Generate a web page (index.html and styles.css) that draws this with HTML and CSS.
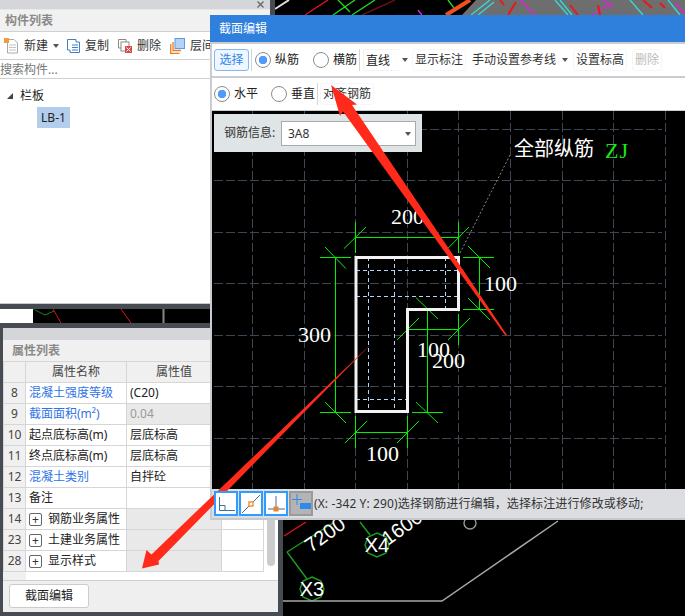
FILE: index.html
```html
<!DOCTYPE html>
<html lang="zh">
<head>
<meta charset="utf-8">
<title>截面编辑</title>
<link rel="stylesheet" href="styles.css">
</head>
<body>
<div class="page">
  <svg class="backdrop" width="685" height="616" viewBox="0 0 685 616">
    <polygon points="462,15 476,0 685,0 685,15" fill="#6e6e6e"/>
    <g fill="none" stroke-width="1.4">
      <path d="M275 9L289 0" stroke="#ddd" stroke-width="2"/>
      <path d="M305 15L328 0M284 536L306 522" stroke="#e0141e"/>
      <path d="M333 15L355 0M352 15L375 0M338 0L350 12M448 0L454 8" stroke="#22d622"/>
      <path d="M362 15L395 0" stroke="#6a0f0f"/>
      <path d="M418 10L422 15" stroke="#e020e0"/>
      <path d="M446 15L470 0" stroke="#f0501a" stroke-width="4"/>
      <path d="M471 15L490 0M478 15L494 2M555 0L568 15M560 0L572 15M630 0L643 15M668 0L680 15" stroke="#35d8d8"/>
      <path d="M520 0L535 15M604 0L612 8M592 15L612 3M684 13L675 3" stroke="#e020e0"/>
      <path d="M500 0L504 5M508 15L516 2M570 5L578 15M598 5L600 15M643 0L652 8M660 3L665 8" stroke="#e81818" stroke-width="2"/>
      <path d="M287 552L333 523M287 552L307 579M360 522L370 535" stroke="#1f9b1f"/>
      <polygon points="312,577 321,581 324,589 321,597 312,601 303,597 300,589 303,581" stroke="#1f9b1f"/>
      <polygon points="377,533 386,537 389,545 386,553 377,557 368,553 365,545 368,537" stroke="#1f9b1f"/>
      <circle cx="470" cy="523" r="6" stroke="#999"/>
      <path d="M283 601H442L558 521" stroke="#a8a8a8" stroke-width="1.5"/>
    </g>
    <text class="bgnum" x="312" y="596" text-anchor="middle">X3</text>
    <text class="bgnum" x="377" y="552" text-anchor="middle">X4</text>
    <text class="bgnum" transform="translate(311 553) rotate(-36)">7200</text>
    <text class="bgnum" transform="translate(388 546) rotate(-36)">1600</text>
  </svg>

  <section class="comp-window">
    <div class="strip"><svg class="close" width="7" height="7" viewBox="0 0 7 7"><path d="M.5.5L6.500 6.500M6.500.5L.5 6.500" stroke="#666" stroke-width="1.300"/></svg></div>
    <div class="pane-title">构件列表</div>
    <div class="comp-toolbar">
      <svg class="tool-icon" width="16" height="17" viewBox="0 0 16 17"><path d="M4.500 2.500H11L14.500 6V16H4.500Z" fill="#fff" stroke="#aaa"/><path d="M6 8H13M6 10.500H13M6 13H13" stroke="#c4c4c4"/><rect x="1" y="1" width="5" height="5" fill="#f39a3c"/></svg>
      <span class="tool-label">新建</span><i class="caret caret-tool"></i>
      <svg class="tool-icon icon-copy" width="13" height="14" viewBox="0 0 13 14"><path d="M.5.500H9V3H12.500V13.500H3V11H.5Z" fill="#fff" stroke="#3f7fd0"/><path d="M5 6H11M5 8.500H11M5 11H11" stroke="#3f7fd0"/></svg>
      <span class="tool-label">复制</span>
      <svg class="tool-icon icon-del" width="14" height="14" viewBox="0 0 14 14"><path d="M.5.500H8V3M.5.500V9H3" fill="none" stroke="#888"/><rect x="3" y="3" width="8" height="9" fill="#fff" stroke="#888"/><rect x="7" y="7" width="7" height="7" fill="#d94a4a"/><path d="M8.500 8.500L12.500 12.500M12.500 8.500L8.500 12.500" stroke="#fff"/></svg>
      <span class="tool-label">删除</span>
      <svg class="tool-icon icon-layer" width="15" height="16" viewBox="0 0 15 16"><path d="M.7 6V15.300H9.500M3 4V12.500H11" fill="none" stroke="#ec7a22" stroke-width="1.300"/><rect x="5" y=".5" width="9.500" height="10" fill="#b5d2f5" stroke="#5f9ae0"/></svg>
      <span class="tool-label">层间</span>
    </div>
    <div class="search">搜索构件...</div>
    <div class="tree">
      <div class="tree-root"><i class="tree-arrow"></i><span>栏板</span></div>
      <div class="tree-leaf">LB-1</div>
    </div>
    <div class="comp-foot">
      <div class="foot-white"></div>
      <svg class="foot-cad" width="237" height="14" viewBox="0 0 237 14"><g fill="none"><path d="M0 0L2 0M2 1L12 6L21 2" stroke="#14821e" stroke-width="1"/><path d="M20 0L28 14M88 0L98 14" stroke="#d8131e"/><path d="M130.500 0V14" stroke="#888" stroke-width="2"/></g></svg>
    </div>
  </section>

  <section class="prop-window">
    <div class="prop-inner">
      <div class="prop-cap"></div>
      <div class="pane-title prop-title">属性列表</div>
      <table class="prop-table">
        <colgroup><col class="c-no"><col class="c-name"><col class="c-val"><col class="c-ext"></colgroup>
        <tr class="head"><th></th><th>属性名称</th><th>属性值</th><th></th></tr>
        <tr><th>8</th><td class="link">混凝土强度等级</td><td>(C20)</td><td></td></tr>
        <tr><th>9</th><td class="link">截面面积(m²)</td><td class="muted">0.04</td><td class="muted"></td></tr>
        <tr><th>10</th><td>起点底标高(m)</td><td>层底标高</td><td></td></tr>
        <tr><th>11</th><td>终点底标高(m)</td><td>层底标高</td><td></td></tr>
        <tr><th>12</th><td class="link">混凝土类别</td><td>自拌砼</td><td></td></tr>
        <tr><th>13</th><td>备注</td><td></td><td></td></tr>
        <tr><th>14</th><td><span class="plus">+</span>钢筋业务属性</td><td class="muted"></td><td></td></tr>
        <tr><th>23</th><td><span class="plus">+</span>土建业务属性</td><td class="muted"></td><td></td></tr>
        <tr><th>28</th><td><span class="plus">+</span>显示样式</td><td class="muted"></td><td></td></tr>
      </table>
      <div class="prop-rest"><div class="rest-no"></div></div>
      <div class="prop-actions"><button class="edit-btn">截面编辑</button></div>
      <div class="scroll-thumb"></div>
    </div>
  </section>

  <section class="dialog">
    <div class="dlg-title">截面编辑</div>
    <div class="dlg-row">
      <button class="btn-select">选择</button>
      <i class="sep sep-a"></i>
      <label class="radio on r-long">纵筋</label>
      <label class="radio r-cross">横筋</label>
      <i class="sep sep-b"></i>
      <span class="combo">直线</span><i class="caret caret-combo"></i>
      <span class="act act-show">显示标注</span>
      <span class="act act-ref">手动设置参考线</span><i class="caret caret-ref"></i>
      <span class="act act-level">设置标高</span>
      <span class="act act-del">删除</span>
    </div>
    <div class="dlg-row row-two">
      <label class="radio on r-h">水平</label>
      <label class="radio r-v">垂直</label>
      <i class="sep sep-c"></i>
      <span class="act act-align">对齐钢筋</span>
    </div>
    <div class="cad">
      <svg class="cad-draw" width="473" height="378" viewBox="212 111 473 378">
        <g class="grid">
          <path d="M214 129.500H662M214 180.500H662M214 232.500H662M214 283.500H662M214 335.500H662M214 386.500H662M214 438.500H662"/>
          <path d="M252.500 111V489M304.500 111V489M355.500 111V489M407.500 111V489M458.500 111V489M510.500 111V489M562.500 111V489M613.500 111V489M665.500 111V489"/>
        </g>
        <path class="leader" d="M510 155L460 253"/>
        <g class="inner">
          <path d="M368.500 257V411M394.500 257V411M445.500 257V309M356 270.500H458M356 296.500H458M356 399.500H407"/>
        </g>
        <g class="dim">
          <path d="M356 237.500H458M355.500 222V253M458.500 222V253M344 248.600L366 227M447.700 248.600L469 227"/>
          <path d="M335.500 257V412M320 257.500H351M320 412.500H351M325 247L346 268.700M325 402L346 423"/>
          <path d="M479.500 257V309M463 257.500H494M463 309.500H494M468 246L490 268M468 298L490 320"/>
          <path d="M427.500 309V412M412 309.500H443M412 412.500H443M416 297.700L438 319M416 402L438 423"/>
          <path d="M407 329.500H458M407.500 314V345M458.500 314V345M397 340L419 318M448 340L470 318"/>
          <path d="M356 432.500H407M355.500 416V448M407.500 416V448M345 443L367 421M397 443L419 421"/>
        </g>
        <path class="outline" d="M356 257.500H458.500V309.500H407.500V411.500H356Z"/>
        <text class="num" x="391" y="224">200</text>
        <text class="num" x="484" y="291">100</text>
        <text class="num" x="298" y="342">300</text>
        <text class="num" x="417" y="357">100</text>
        <text class="num" x="432" y="368">200</text>
        <text class="num" x="366" y="461">100</text>
        <text class="note" x="514" y="156">全部纵筋</text>
        <text class="note-code" x="605" y="158">ZJ</text>
      </svg>
      <div class="rebar-info">
        <span class="info-label">钢筋信息:</span>
        <span class="info-select">3A8<i class="caret caret-select"></i></span>
      </div>
    </div>
    <div class="status">
      <span class="snap"><svg width="20" height="20" viewBox="0 0 20 20"><path d="M3.500 3V16.500H19M3.500 11.500H9V16.500" fill="none" stroke="#3e6f9e"/></svg></span>
      <span class="snap"><svg width="20" height="20" viewBox="0 0 20 20"><path d="M1 19L19 1" stroke="#3e6f9e"/><rect x="8" y="8" width="4" height="4" fill="#fff" stroke="#e8842c" stroke-width="1.300"/></svg></span>
      <span class="snap"><svg width="20" height="20" viewBox="0 0 20 20"><path d="M10 2V15M2 15H19" stroke="#3e6f9e"/><rect x="8" y="13" width="4" height="4" fill="#e8842c" stroke="#e8842c"/></svg></span>
      <span class="snap snap-on"><svg width="20" height="20" viewBox="0 0 20 20"><path d="M6 0V11M1 5.500H11" stroke="#2d8bee"/><rect x="9" y="9" width="11" height="6" fill="#2d8bee"/></svg></span>
      <span class="status-text">(X: -342 Y: 290)选择钢筋进行编辑，选择标注进行修改或移动;</span>
    </div>
  </section>

  <svg class="arrows" width="685" height="616" viewBox="0 0 685 616">
    <polygon points="331,85 357,104.500 352,105 507,335 505,335 343,111.500 340,116"/>
    <polygon points="142,568.500 146.500,550 151.500,554.500 372,343 158.500,561 159,564.500"/>
  </svg>
</div>
</body>
</html>
```
FILE: styles.css
```css
* { box-sizing: border-box; }
html, body { margin: 0; padding: 0; }
body {
  width: 685px;
  height: 616px;
  overflow: hidden;
  background: #000;
  font: 12px/18px "Noto Sans", "Noto Sans CJK SC", sans-serif;
  color: #222;
}
.page { position: relative; width: 685px; height: 616px; overflow: hidden; }
.backdrop { position: absolute; left: 0; top: 0; display: block; }
.bgnum { font: 20px "Liberation Sans", sans-serif; fill: #fff; }

/* component list window */
.comp-window {
  position: absolute; left: 0; top: 0; width: 275px; height: 323px;
  background: #fff; border-right: 5px solid #474c52;
  display: flex; flex-direction: column;
}
.strip { flex: none; height: 10px; background: #d5d6da; border-bottom: 1px solid #e8e8e8; position: relative; }
.close { position: absolute; left: 257px; top: 1px; display: block; }
.pane-title {
  flex: none; height: 22px; padding-left: 5px; line-height: 21px; background: #f1f1f1;
  border-bottom: 1px solid #cfd0d2; color: #8a8a8a; font-weight: 700;
}
.comp-toolbar {
  flex: none; height: 28px; display: flex; align-items: center; padding-left: 3px;
  border-bottom: 1px solid #cfd0d2; background: #fff; white-space: nowrap;
}
.tool-icon { flex: none; }
.tool-label { color: #333; margin-left: 5px; }
.icon-copy { margin-left: 8px; }
.icon-del { margin-left: 9px; }
.icon-layer { margin-left: 9px; }
.caret { display: inline-block; flex: none; width: 0; height: 0; border: 3.500px solid transparent; border-top: 4px solid #555; border-bottom: 0; }
.caret-tool { margin-left: 5px; }
.search { flex: none; height: 19px; padding-top: 1px; line-height: 18px; color: #777; border-bottom: 1px solid #cfd0d2; background: #fff; }
.tree { flex: none; height: 225px; background: #fff; border-bottom: 1px solid #c9c9c9; padding-top: 7px; }
.tree-root { display: flex; align-items: center; height: 20px; padding-left: 7px; color: #222; font-size: 12px; }
.tree-arrow { width: 0; height: 0; border-left: 6px solid transparent; border-bottom: 6px solid #444; margin-right: 7px; }
.tree-leaf { width: 33px; height: 21px; margin: 1px 0 0 37px; background: #b3cdec; line-height: 21px; text-align: center; font-size: 12px; color: #222; }
.comp-foot { flex: 1; background: #474c52; padding: 5px 0; display: flex; }
.foot-white { width: 33px; height: 14px; background: #fff; }
.foot-cad { display: block; background: #000; }

/* property panel */
.prop-window {
  position: absolute; left: 0; top: 323px; width: 283px; height: 293px;
  background: #474c52; padding: 5px 5px 4px 3px;
}
.prop-inner { position: relative; height: 284px; background: #fff; display: flex; flex-direction: column; }
.prop-cap { flex: none; height: 12px; background: #d5d6da; }
.prop-title { height: 21px; line-height: 21px; background: #f0f0f0; border-bottom: 0; padding-left: 9px; }
.prop-table { flex: none; width: 260px; table-layout: fixed; border-collapse: collapse; }
.c-no { width: 22px; }
.c-name { width: 101px; }
.c-val { width: 95px; }
.c-ext { width: 42px; }
.prop-table tr { height: 21px; }
.prop-table th, .prop-table td {
  padding: 0; border: 1px solid #d6d6d6; font-size: 12px; line-height: 18px;
  font-weight: 400; white-space: nowrap; overflow: hidden; height: 21px;
}
.prop-table th { background: #f0f0f0; color: #444; text-align: center; }
.prop-table .head th { color: #444; }
.prop-table td { padding-left: 3px; background: #fff; color: #222; }
.prop-table td.link { color: #2f74e6; }
.prop-table td.muted { background: #e9e9e9; color: #999; }
.plus {
  display: inline-block; width: 13px; height: 13px; margin-right: 6px; vertical-align: -1px;
  border: 1px solid #666; border-radius: 2px; text-align: center; font-size: 12px; line-height: 11px; color: #333;
}
.prop-rest { flex: none; height: 9px; border-bottom: 1px solid #cfcfcf; }
.rest-no { width: 23px; height: 8px; background: #f0f0f0; }
.prop-actions { flex: 1; background: #efefef; padding: 3px 6px 4px; }
.edit-btn {
  display: block; width: 80px; height: 24px; padding: 0; background: #fff; border: 1px solid #ccc;
  border-radius: 3px; font: inherit; color: #222;
}
.scroll-thumb { position: absolute; left: 264px; top: 100px; width: 8px; height: 138px; background: #ccc; border-radius: 0 0 4px 4px; }

/* dialog */
.dialog { position: absolute; left: 210px; top: 15px; width: 475px; height: 505px; background: #c9ccd0; }
.dlg-title { height: 27px; padding-left: 9px; line-height: 27px; background: #2f7fdc; color: #fff; }
.dlg-row {
  height: 32px; margin: 2px 0 0 2px; background: #fff; display: flex; align-items: center;
  position: relative; white-space: nowrap;
}
.row-two { height: 32px; }
.btn-select {
  flex: none; width: 35px; height: 22px; margin-left: 2px; padding: 0; font: inherit; color: #2f86e8;
  background: #eef6ff; border: 1px solid #84b8f0; border-radius: 3px;
}
.sep { flex: none; width: 1px; height: 22px; background: #d4d4d4; }
.sep-a { margin-left: 2px; }
.sep-b { margin-left: 2px; }
.sep-c { margin-left: 2px; }
.radio { display: flex; align-items: center; color: #222; }
.radio::before {
  content: ""; flex: none; width: 14px; height: 14px; margin-right: 4px; border: 1px solid #8c8c8c; border-radius: 50%;
  background: #fff;
}
.radio.on::before { background: radial-gradient(circle, #4d9bff 0 4px, #fff 4.500px); }
.r-long { margin-left: 3px; }
.r-cross { margin-left: 14px; }
.r-h { margin-left: 2px; }
.r-v { margin-left: 13px; }
.combo { flex: none; width: 36px; height: 22px; margin-left: 3px; padding-left: 2px; line-height: 22px; border: 1px solid #f3f3f3; border-right: 0; color: #222; }
.caret-combo { margin-left: 3px; }
.act { flex: none; height: 22px; line-height: 20px; padding: 0 2px; border: 1px solid #f6f6f6; border-radius: 3px; color: #333; }
.act-show { margin-left: 4px; }
.act-ref { margin-left: 3px; border-color: transparent; }
.caret-ref { margin-left: 3px; }
.act-level { margin-left: 5px; }
.act-del { margin-left: 5px; color: #bbb; }
.act-align { margin-left: 2px; }
.cad { position: relative; height: 378px; margin: 1px 0 0 2px; background: #000; }
.cad-draw { display: block; }
.grid path { fill: none; stroke: #3d4452; stroke-width: 1; stroke-dasharray: 9 3 9 3; }
.leader { fill: none; stroke: #8c8c8c; stroke-dasharray: 2 2; }
.inner path { fill: none; stroke: #b4d4f8; stroke-dasharray: 4 3; }
.dim path { fill: none; stroke: #00f000; stroke-width: 1; }
.outline { fill: none; stroke: #f2f2f2; stroke-width: 3; }
.num { font: 22px "Liberation Serif", serif; fill: #fff; }
.note { font: 20px "Noto Sans CJK SC", sans-serif; fill: #fff; }
.note-code { font: 22px "Liberation Serif", serif; fill: #18e818; letter-spacing: 1px; }
.rebar-info {
  position: absolute; left: 2px; top: 3px; width: 208px; height: 38px; background: #dfe5e6;
  display: flex; align-items: center; padding-left: 10px;
}
.info-label { flex: none; width: 57px; color: #333; }
.info-select {
  position: relative; flex: none; width: 135px; height: 25px; padding-left: 6px; line-height: 23px; background: #fff;
  border: 1px solid #aaa; color: #333;
}
.caret-select { position: absolute; right: 4px; top: 10px; }
.status {
  height: 31px; margin-left: 2px; background: #dcdde1; border-bottom: 2px solid #c5c8cc;
  display: flex; align-items: center; padding-left: 2px; white-space: nowrap;
}
.snap {
  position: relative; z-index: 5; flex: none;
  width: 24px; height: 25px; margin-right: 1px; background: #fff; border: 2px solid #2f9cff;
  display: flex; align-items: center; justify-content: center;
}
.snap-on { background: #b4b4b4; border-color: #9a9a9a; }
.status-text { margin-left: 0; color: #333; letter-spacing: .12px; }

/* annotations */
.arrows { position: absolute; left: 0; top: 0; z-index: 3; pointer-events: none; }
.arrows polygon { fill: #ff2a1a; }
```
